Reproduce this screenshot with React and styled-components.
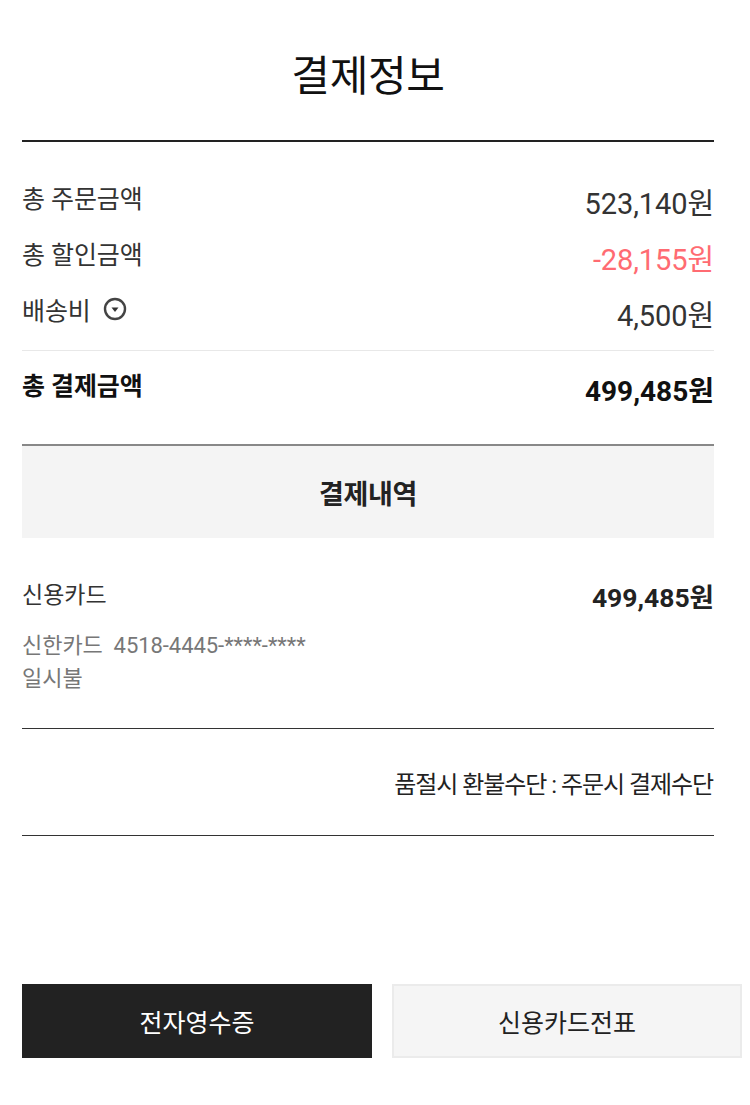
import styled, { createGlobalStyle } from "styled-components";

const Global = createGlobalStyle`
  html, body { margin: 0; padding: 0; background: #fff; }
  body { font-family: Roboto, "Noto Sans CJK KR", sans-serif; color: #111; }
`;

const Page = styled.div`
  width: 750px;
  height: 1105px;
  overflow: hidden;
  box-sizing: border-box;
  padding: 0 8px 0 22px;
`;

const Inner = styled.div`
  width: 692px;
`;

const Title = styled.h1`
  margin: 0;
  height: 142px;
  box-sizing: border-box;
  padding-top: 49px;
  border-bottom: 2px solid #222;
  text-align: center;
  font-size: 42px;
  line-height: 56px;
  font-weight: 400;
  letter-spacing: -0.3px;
  color: #111;
`;

const Rows = styled.div`
  padding-top: 31px;
  padding-bottom: 9px;
`;

const Row = styled.div`
  display: flex;
  justify-content: space-between;
  align-items: center;
  height: 56px;
`;

const Label = styled.span`
  display: flex;
  align-items: center;
  gap: 12px;
  font-size: 25px;
  letter-spacing: -0.1px;
  color: #333;
  margin-top: -9px;
`;

const Amount = styled.span`
  font-size: 29px;
  letter-spacing: -0.1px;
  color: ${p => (p.$red ? "#ff6b72" : "#333")};
`;

const TotalRow = styled.div`
  display: flex;
  justify-content: space-between;
  align-items: center;
  height: 96px;
  border-top: 1px solid #e8e8e8;
  border-bottom: 2px solid #888;
  box-sizing: border-box;
  padding-bottom: 27px;
`;

const TotalLabel = styled.span`
  font-size: 25px;
  font-weight: 700;
  letter-spacing: -0.1px;
  color: #111;
`;

const TotalAmount = styled.span`
  font-size: 28px;
  font-weight: 700;
  margin-top: 9px;
  color: #111;
`;

const SectionHead = styled.div`
  height: 92px;
  background: #f4f4f4;
  display: flex;
  align-items: center;
  justify-content: center;
  font-size: 27px;
  font-weight: 700;
  letter-spacing: -0.3px;
  color: #222;
`;

const PayBlock = styled.div`
  height: 191px;
  box-sizing: border-box;
  padding-top: 35px;
  border-bottom: 1px solid #333;
`;

const PayRow = styled.div`
  display: flex;
  justify-content: space-between;
  align-items: center;
  height: 40px;
`;

const PayName = styled.span`
  font-size: 23px;
  color: #333;
`;

const PayAmount = styled.span`
  font-size: 26.5px;
  font-weight: 700;
  margin-top: 4px;
  color: #222;
`;

const PayDetail = styled.div`
  margin-top: 16px;
  font-size: 22px;
  line-height: 33px;
  letter-spacing: -0.05px;
  color: #777;
`;

const RefundNote = styled.div`
  height: 107px;
  box-sizing: border-box;
  padding-right: 1px;
  border-bottom: 1px solid #333;
  display: flex;
  align-items: center;
  justify-content: flex-end;
  font-size: 24px;
  letter-spacing: -1.05px;
  color: #222;
`;

const Buttons = styled.div`
  display: flex;
  gap: 20px;
  margin-top: 148px;
  width: 720px;
`;

const Button = styled.div`
  width: 350px;
  height: 74px;
  box-sizing: border-box;
  display: flex;
  align-items: center;
  justify-content: center;
  font-size: 25px;
  background: ${p => (p.$dark ? "#222" : "#f5f5f5")};
  color: ${p => (p.$dark ? "#fff" : "#222")};
  border: ${p => (p.$dark ? "none" : "2px solid #ebebeb")};
`;

const Chevron = () => (
  <svg width="24" height="24" viewBox="0 0 24 24" fill="none" stroke="#444" strokeWidth="2.4">
    <circle cx="12" cy="12" r="10" />
    <path d="M8.5 10.5h7l-3.5 4.5z" fill="#333" stroke="none" />
  </svg>
);

export default function App() {
  return (
    <Page>
      <Global />
      <Inner>
        <Title>결제정보</Title>
        <Rows>
          <Row><Label>총 주문금액</Label><Amount>523,140원</Amount></Row>
          <Row><Label>총 할인금액</Label><Amount $red>-28,155원</Amount></Row>
          <Row><Label>배송비 <Chevron /></Label><Amount>4,500원</Amount></Row>
        </Rows>
        <TotalRow><TotalLabel>총 결제금액</TotalLabel><TotalAmount>499,485원</TotalAmount></TotalRow>
        <SectionHead>결제내역</SectionHead>
        <PayBlock>
          <PayRow><PayName>신용카드</PayName><PayAmount>499,485원</PayAmount></PayRow>
          <PayDetail>신한카드 &nbsp;4518-4445-****-****<br />일시불</PayDetail>
        </PayBlock>
        <RefundNote>품절시 환불수단 : 주문시 결제수단</RefundNote>
        <Buttons>
          <Button $dark>전자영수증</Button>
          <Button>신용카드전표</Button>
        </Buttons>
      </Inner>
    </Page>
  );
}
